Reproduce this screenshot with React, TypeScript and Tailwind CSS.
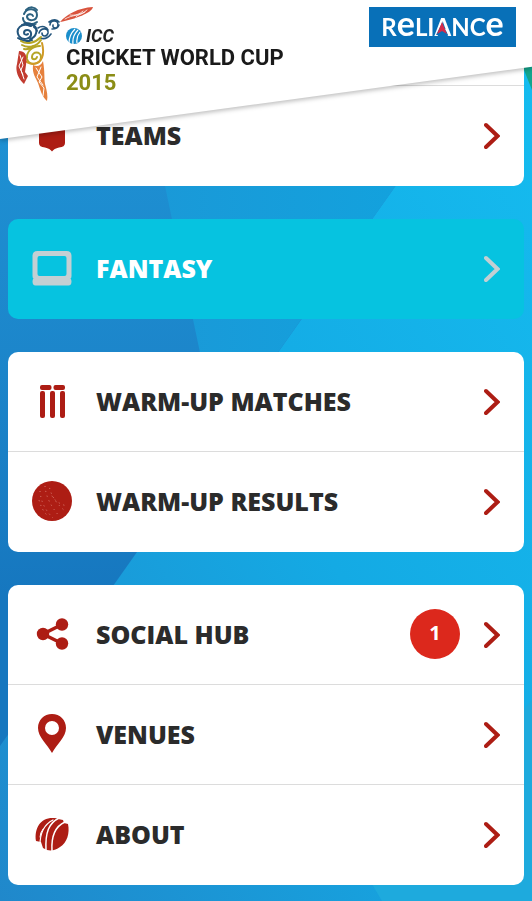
import React from "react";

type Item = { label: string; icon: React.ReactNode; badge?: number };

const RED = "#ad1d14";

const ShieldIcon = () => (
  <svg viewBox="0 0 40 40" className="size-10" fill={RED}>
    <path d="M7 5Q14 5 20 0q6 5 13 5v23q0 4-6 4.500-5 1-7 4-2-3-7-4-6-.5-6-4.500z" />
  </svg>
);

const LaptopIcon = () => (
  <svg viewBox="0 0 40 40" className="size-10" fill="#c3cfd3">
    <path
      fillRule="evenodd"
      d="M5.500 3h29q5 0 5 5v20q0 2-1 2.500 1 1 1 3 0 4-3 4h-33q-3 0-3-4 0-2 1-3-1-.5-1-2.500V8q0-5 5-5zm2 5q-2 0-2 2v16q0 2 2 2h25q2 0 2-2V10q0-2-2-2z"
    />
  </svg>
);

const StumpsIcon = () => (
  <svg viewBox="0 0 40 40" className="size-10" fill={RED}>
    <rect x="8" y="4" width="11.500" height="5" rx="2" />
    <rect x="21.500" y="4" width="11.500" height="5" rx="2" />
    <rect x="8" y="10" width="5" height="27" rx="2" />
    <rect x="18" y="10" width="5" height="27" rx="2" />
    <rect x="28" y="10" width="5" height="27" rx="2" />
  </svg>
);

const BallIcon = () => (
  <svg viewBox="0 0 40 40" className="size-10">
    <circle cx="20" cy="20" r="20" fill={RED} />
    <g fill="none" stroke="#dd8379" strokeWidth="1" strokeDasharray="1 4">
      <path d="M8 10q1 15 13 27" />
      <path d="M13 5q1 15 15 31" />
      <path d="M17 4q2 14 16 26" strokeDashoffset="2" />
      <path d="M6 15q3 14 10 20" strokeDashoffset="1" />
      <path d="M19 13q4 9 16 12" strokeDashoffset="3" />
    </g>
  </svg>
);

const ShareIcon = () => (
  <svg viewBox="0 0 40 40" className="size-10" fill={RED}>
    <circle cx="11" cy="20" r="6.200" />
    <circle cx="30" cy="10.500" r="6.200" />
    <circle cx="30" cy="29.500" r="6.200" />
    <path d="M30 10.500 11 20l19 9.500" fill="none" stroke={RED} strokeWidth="3.500" />
  </svg>
);

const PinIcon = () => (
  <svg viewBox="0 0 40 40" className="size-10" fill={RED}>
    <path
      fillRule="evenodd"
      d="M20 0c8 0 14 6 14 14 0 9-9 16-14 25C15 30 6 23 6 14 6 6 12 0 20 0zm0 7a7 7 0 1 0 0 14 7 7 0 0 0 0-14z"
    />
  </svg>
);

const SeamIcon = () => (
  <svg viewBox="0 0 40 40" className="size-10">
    <path
      fill={RED}
      d="M4 27C2 14 9 3 22 4q3 0 4 1l5 1 1 3 4 1c2 9-1 19-8 23-4 3-8 4-13 3l-4-2-2-6z"
    />
    <g fill="none" stroke="#fff" strokeLinecap="round">
      <path d="M27 4C17 9 13 18 14 37" strokeWidth="1.500" />
      <path d="M33 8C24 12 19 21 20 37" strokeWidth="1.500" />
      <path d="M21 6C13 10 8 17 8 31" strokeWidth="1.200" />
      <path d="M11 15q-3 4-3 8" strokeWidth="1" />
    </g>
  </svg>
);

const Chevron = ({ muted }: { muted?: boolean }) => (
  <svg viewBox="0 0 16 28" className="h-7 w-4" fill="none" strokeWidth="4" strokeLinecap="round">
    <path d="M2 4l11.500 11L2 26" stroke={muted ? "#c3cfd3" : RED} />
  </svg>
);

function Row({ item, highlight }: { item: Item; highlight?: boolean }) {
  return (
    <li className="h-[100px] border-b border-[#dcdcdc] last:border-b-0">
      <a href="#" className="flex h-full items-center px-6 pb-0.5">
        {item.icon}
        <span
          className={
            highlight
              ? "ml-6 flex-1 text-[25px] leading-8 font-extrabold text-white"
              : "ml-6 flex-1 text-[25px] leading-8 font-extrabold text-[#2b2b2b]"
          }
        >
          {item.label}
        </span>
        {item.badge !== undefined && (
          <span className="mr-6 flex size-[50px] items-center justify-center rounded-full bg-[#dc281c] pb-0.5 text-xl font-bold text-white">
            {item.badge}
          </span>
        )}
        <Chevron muted={highlight} />
      </a>
    </li>
  );
}

function Batsman() {
  return (
    <svg viewBox="0 0 80 98" className="h-[98px] w-20" fill="none" strokeLinecap="round">
      <g stroke="#2d6280" strokeWidth="2">
        <path d="M8 9C11 2 21 3 21 10c0 6-9 7-10 2 0-3 5-4 6-1" />
        <path d="M7 13c0 6 8 8 14 4M10 5c4-4 9-3 11 0" />
        <path d="M9 19c4 3 8 2 11 0" strokeWidth="1.500" />
      </g>
      <g stroke="#24557c" strokeWidth="2">
        <path d="M15 21C5 17-1 24 3 31c4 5 13 3 12-3-1-4-7-4-7 0 0 2 3 2 4 1" />
        <path d="M6 20c7-4 14 0 15 6M18 22c4 2 3 10-4 12M2 33c4 3 9 4 14 2" />
        <path d="M23 28c2-6 10-5 9 0-1 4-6 4-6 0M22 23c4-3 9-1 10 2M24 33c5 2 8 0 11-4" strokeWidth="1.600" />
        <path d="M34 20c0-5 8-6 8 0 0 4-6 4-5 0M33 17c4-3 8-3 10 0M36 24c3 0 6-1 7-4" strokeWidth="1.600" />
      </g>
      <path d="M44 17C51 9 62 3 77 2c-1 6-18 12-33 15z" fill="#d9533c" />
      <g stroke="#fff" strokeWidth="0.800">
        <path d="M49 14c8-5 14-2 22-9M54 10c5 1 10-1 13-4M60 12c2-3 5-2 9-5" />
      </g>
      <g stroke="#b5a526" strokeWidth="2">
        <path d="M5 36c6 4 14 2 20-4M6 40c7 4 15 1 19-5M8 44c4 1 6 0 9-3" />
        <path d="M24 41c-8 0-14 6-13 13 2 7 14 6 14-2 0-6-9-6-9 0 0 3 4 3 5 0" />
        <path d="M26 38c3 12 0 20-9 21-4 0-7-2-9-5" stroke="#d09a27" />
      </g>
      <path d="M3 46c8 0 8 7 7 14l-1 7 3 4-4 8C2 74-1 65 1 59z" fill="#c23b30" />
      <path d="M4 50l3 10-2 5 3 9M7 52l-4 9 4 9" stroke="#fff" strokeWidth="1" />
      <path d="M17 60c4 2 8 1 10-4 2 11 1 17 2 23 2 7 3 12 2 17-5-4-7-12-9-18-2-5-6-9-5-18z" fill="#e6813d" />
      <path d="M20 63l6 9-3 5 5 6-1 8M25 62l-4 10 6 8" stroke="#fff" strokeWidth="1" />
    </svg>
  );
}

function Header() {
  return (
    <header className="absolute inset-x-0 top-0 z-10 drop-shadow-[0_2px_2px_rgba(0,0,0,0.25)]">
      <div className="flex h-[139px] items-start justify-between bg-white px-4 [clip-path:polygon(0_0,100%_0,100%_48%,0_100%)]">
        <div className="flex pt-[5px]">
          <Batsman />
          <div className="-ml-[30px] pt-5 font-[Roboto,sans-serif] font-bold whitespace-nowrap">
            <div className="flex items-center gap-1 text-lg leading-[22px] text-[#222] italic">
              <svg viewBox="0 0 16 16" className="size-4">
                <circle cx="8" cy="8" r="8" fill="#1b8ecb" />
                <path d="M3 15Q3 7 9 1M7 16Q6 8 12 2M11 15q-1-6 3-11" fill="none" stroke="#fff" strokeWidth="1.200" />
              </svg>
              ICC
            </div>
            <div className="text-[22px] leading-[22px] text-[#1a1a1a]">CRICKET WORLD CUP</div>
            <div className="text-[22px] leading-7 text-[#8b8d16]">2015</div>
          </div>
        </div>
        <div className="mt-[7px] flex h-10 w-[147px] items-center justify-center bg-[#0870b8] font-[Lato,sans-serif] text-2xl font-bold text-white">
          <span className="flex items-baseline">
            R<span className="text-[34px] leading-6">e</span>LI
            <span className="relative">
              A
              <svg viewBox="0 0 16 16" className="absolute top-2 left-0 size-4">
                <path d="M8 4l6 12H2z" fill="#0870b8" />
                <path d="M8 3l5 12-5-3-5 3z" fill="#d52b4a" />
              </svg>
            </span>
            NC<span className="text-[34px] leading-6">e</span>
          </span>
        </div>
      </div>
    </header>
  );
}

function Backdrop() {
  return (
    <svg viewBox="0 0 532 901" preserveAspectRatio="none" className="absolute inset-0 -z-10 h-full w-full">
      <defs>
        <linearGradient id="deep" x1="0" y1="0" x2="0" y2="1">
          <stop offset="0" stopColor="#1f97d8" />
          <stop offset="0.500" stopColor="#1c85ca" />
          <stop offset="0.800" stopColor="#1677bf" />
        </linearGradient>
        <linearGradient id="bright" x1="1" y1="0" x2="0" y2="1">
          <stop offset="0" stopColor="#15bdf0" />
          <stop offset="0.500" stopColor="#14aae4" />
          <stop offset="1" stopColor="#2088cb" />
        </linearGradient>
        <linearGradient id="band" x1="0" y1="0" x2="1" y2="0">
          <stop offset="0" stopColor="#1b98d7" />
          <stop offset="1" stopColor="#0fa6e0" />
        </linearGradient>
      </defs>
      <rect width="532" height="901" fill="url(#bright)" />
      <path d="M0 0h527L0 746z" fill="url(#deep)" />
      <path d="M126 0h401L257 382l-50 4z" fill="url(#band)" />
      <path d="M372 884l10 17h150V700z" fill="#1eaadd" />
      <path d="M520 60h12v30z" fill="#12a58d" />
    </svg>
  );
}

const groups: Item[][] = [
  [
    { label: "WARM-UP MATCHES", icon: <StumpsIcon /> },
    { label: "WARM-UP RESULTS", icon: <BallIcon /> },
  ],
  [
    { label: "SOCIAL HUB", icon: <ShareIcon />, badge: 1 },
    { label: "VENUES", icon: <PinIcon /> },
    { label: "ABOUT", icon: <SeamIcon /> },
  ],
];

export default function App() {
  return (
    <div className="relative isolate min-h-screen overflow-hidden font-['Open_Sans',sans-serif]">
      <Backdrop />
      <Header />
      <nav className="flex flex-col gap-[33px] px-2 pt-[50px] pb-4">
        <ul className="rounded-[10px] bg-white">
          <li className="h-9 border-b border-[#dcdcdc]" />
          <Row item={{ label: "TEAMS", icon: <ShieldIcon /> }} />
        </ul>
        <ul className="rounded-[10px] bg-[#06c3e0]">
          <Row item={{ label: "FANTASY", icon: <LaptopIcon /> }} highlight />
        </ul>
        {groups.map((group, i) => (
          <ul key={i} className="rounded-[10px] bg-white">
            {group.map((item) => (
              <Row key={item.label} item={item} />
            ))}
          </ul>
        ))}
      </nav>
    </div>
  );
}
